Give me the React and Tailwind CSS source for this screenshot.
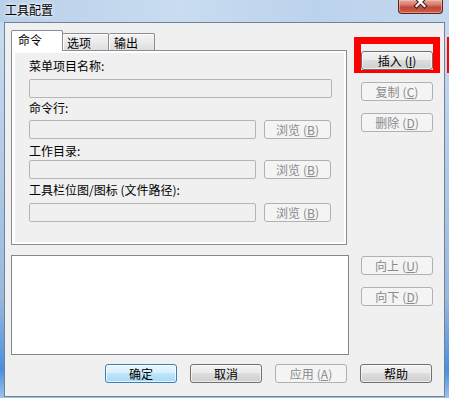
import React from "react";

const enabledBtn =
  "h-[19px] w-[72px] shrink-0 rounded-[3px] border border-[#707070] bg-[linear-gradient(#f2f2f2,#ebebeb_45%,#dddddd_50%,#cfcfcf)] flex items-center justify-center text-[12px] leading-none text-black shadow-[inset_0_0_0_1px_rgba(255,255,255,0.6)]";
const defaultBtn =
  "h-[19px] w-[72px] shrink-0 rounded-[3px] border border-[#3c7fb1] bg-[linear-gradient(#eaf6fd,#d9f0fc_45%,#bee6fd_50%,#a7d9f5)] flex items-center justify-center text-[12px] leading-none text-black shadow-[inset_0_0_0_1px_rgba(255,255,255,0.7)]";
const disabledBtn =
  "h-[19px] shrink-0 rounded-[3px] border border-[#adb2b5] bg-[#f4f4f4] flex items-center justify-center text-[12px] leading-none text-[#8a8a8a]";
const inputCls =
  "h-[19px] shrink-0 rounded-[2px] border border-[#b5b5b5] bg-[#f0f0f0]";

function Mn({ text, k }) {
  return (
    <span className="flex items-center">
      <span>{text}</span>
      {k && (
        <span className="ml-[3px]">
          (<span className="underline underline-offset-1">{k}</span>)
        </span>
      )}
    </span>
  );
}

function Label({ children, mt }) {
  return (
    <div className={`h-[14px] text-[12px] leading-[14px] text-black whitespace-nowrap ${mt}`}>
      {children}
    </div>
  );
}

export default function App() {
  return (
    <div className="relative w-[449px] h-[398px] overflow-hidden flex flex-col font-['Noto_Sans_CJK_SC',sans-serif] bg-[linear-gradient(to_bottom,#bcd2ea,#c8dbef_8%,#b3cbe7_40%,#98b8dc_75%,#4a8fe0_93%,#9cc2ec)]">
      {/* title bar */}
      <div className="h-[22px] shrink-0 flex items-start bg-[linear-gradient(to_right,#b9d0ea,#c9dcf0_40%,#bcd3ec_70%,#c4d8ee)]">
        <div className="pl-[5px] pt-[4px] text-[12px] leading-[12px] text-black [text-shadow:0_0_5px_#ffffff,0_0_3px_#ffffff]">
          工具配置
        </div>
        <div className="ml-auto mr-[6px] w-[45px] h-[14px] rounded-b-[4px] border border-t-0 border-[#5a2520] bg-[linear-gradient(#e7a99f,#d5806f_35%,#c2473a_55%,#cc5e46)] shadow-[inset_0_0_0_1px_rgba(255,200,190,0.5)] overflow-hidden">
          <svg width="43" height="13" viewBox="0 0 43 13">
            <path d="M17.5 -2 L25.5 6 M25.5 -2 L17.5 6" stroke="#3a1a16" strokeWidth="4.2" strokeLinecap="square" />
            <path d="M17.5 -2 L25.5 6 M25.5 -2 L17.5 6" stroke="#ffffff" strokeWidth="2.2" strokeLinecap="square" />
          </svg>
        </div>
      </div>

      {/* client area */}
      <div className="ml-[4px] w-[441px] h-[375px] shrink-0 border border-[#6f8299] bg-[#f0f0f0] flex flex-col">
        <div className="flex items-start">
          {/* left column */}
          <div className="ml-[6px] mt-[7px] w-[338px] flex flex-col">
            {/* tabs */}
            <div className="relative z-10 h-[20px] flex items-end">
              <div className="h-[21px] w-[52px] -mb-px border-l border-t border-r border-[#898c95] rounded-t-[2px] bg-white pl-[6px] pt-[3px] text-[12px] leading-[12px] text-black">
                命令
              </div>
              <div className="h-[17px] w-[47px] -ml-px border-l border-t border-r border-[#898c95] rounded-t-[2px] bg-[linear-gradient(#f3f3f3,#ebebeb_50%,#dedede)] shadow-[inset_1px_1px_0_#ffffff] pl-[4px] pt-[3px] text-[12px] leading-[12px] text-black">
                选项
              </div>
              <div className="h-[17px] w-[46px] border-r border-t border-[#898c95] rounded-t-[2px] bg-[linear-gradient(#f3f3f3,#ebebeb_50%,#dedede)] shadow-[inset_1px_1px_0_#ffffff] pl-[5px] pt-[3px] text-[12px] leading-[12px] text-black">
                输出
              </div>
            </div>
            {/* tab panel */}
            <div className="h-[195px] w-[336px] border border-[#898c95] bg-white flex">
              <div className="flex-1 mt-[2px] ml-[3px] mr-[2px] mb-[2px] bg-[#f0f0f0] flex flex-col pl-[14px]">
                <Label mt="mt-[6px]">菜单项目名称:</Label>
                <div className={`${inputCls} w-[303px] mt-[6px]`} />
                <Label mt="mt-[3px]">命令行:</Label>
                <div className="flex mt-[5px]">
                  <div className={`${inputCls} w-[227px]`} />
                  <div className={`${disabledBtn} w-[67px] ml-[8px]`}>
                    <Mn text="浏览" k="B" />
                  </div>
                </div>
                <Label mt="mt-[5px]">工作目录:</Label>
                <div className="flex mt-[2px]">
                  <div className={`${inputCls} w-[227px]`} />
                  <div className={`${disabledBtn} w-[67px] ml-[8px]`}>
                    <Mn text="浏览" k="B" />
                  </div>
                </div>
                <Label mt="mt-[4px]">工具栏位图/图标 (文件路径):</Label>
                <div className="flex mt-[6px]">
                  <div className={`${inputCls} w-[227px]`} />
                  <div className={`${disabledBtn} w-[67px] ml-[8px]`}>
                    <Mn text="浏览" k="B" />
                  </div>
                </div>
              </div>
            </div>
            {/* list box */}
            <div className="mt-[10px] h-[100px] w-[338px] border border-[#828790] bg-white" />
          </div>

          {/* right column */}
          <div className="ml-[12px] mt-[28px] flex flex-col">
            <div className={enabledBtn}>
              <Mn text="插入" k="I" />
            </div>
            <div className={`${disabledBtn} w-[72px] mt-[12px]`}>
              <Mn text="复制" k="C" />
            </div>
            <div className={`${disabledBtn} w-[72px] mt-[12px]`}>
              <Mn text="删除" k="D" />
            </div>
            <div className={`${disabledBtn} w-[72px] mt-[124px]`}>
              <Mn text="向上" k="U" />
            </div>
            <div className={`${disabledBtn} w-[72px] mt-[12px]`}>
              <Mn text="向下" k="D" />
            </div>
          </div>
        </div>

        {/* bottom buttons */}
        <div className="mt-[9px] ml-[100px] flex gap-[13px]">
          <div className={defaultBtn}>确定</div>
          <div className={enabledBtn}>取消</div>
          <div className={`${disabledBtn} w-[72px]`}>
            <Mn text="应用" k="A" />
          </div>
          <div className={enabledBtn}>帮助</div>
        </div>
      </div>

      {/* red annotation overlay */}
      <div className="absolute left-[354px] top-[37px] w-[86px] h-[36px] border-[7px] border-b-[3px] border-[#ff0000] pointer-events-none" />
      <div className="absolute left-[447px] top-[37px] w-[2px] h-[36px] bg-[#ff0000] pointer-events-none" />
    </div>
  );
}
